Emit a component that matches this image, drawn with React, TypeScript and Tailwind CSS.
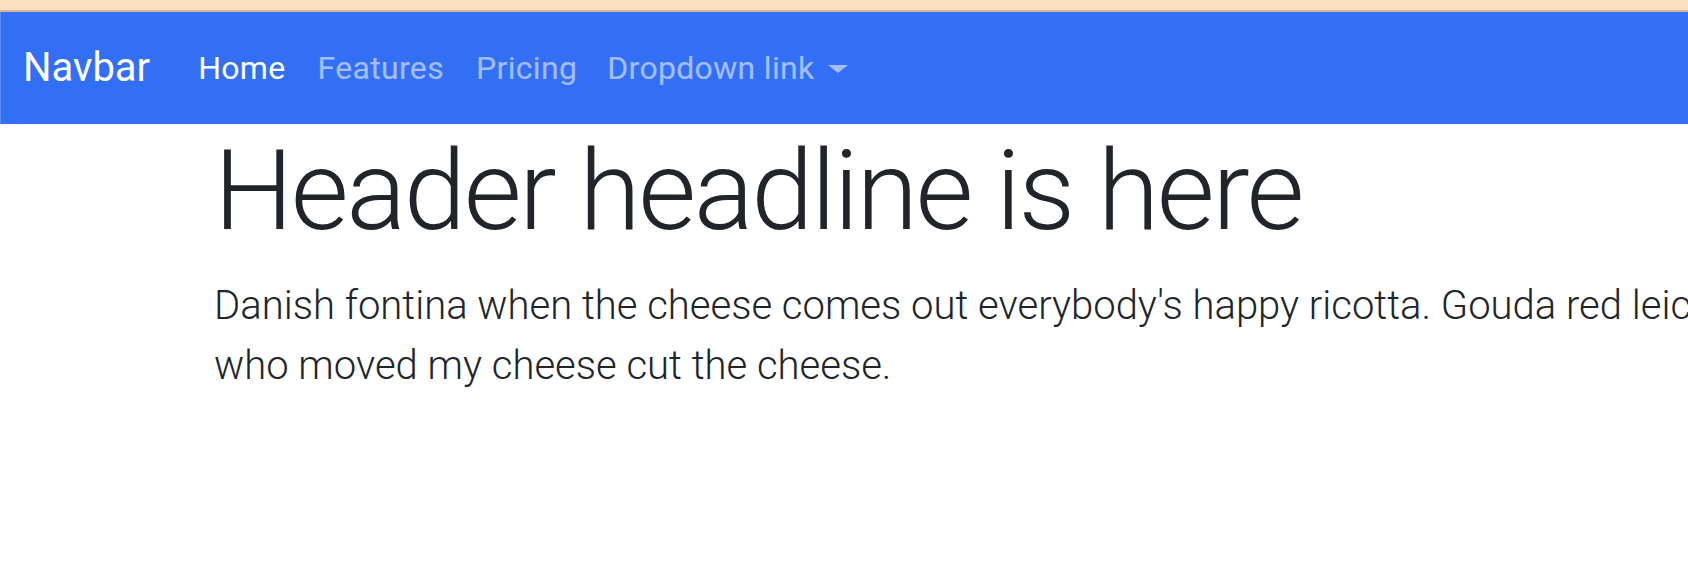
import React from 'react';

const links = [
  { label: 'Home', active: true },
  { label: 'Features' },
  { label: 'Pricing' },
];

export default function App() {
  return (
    <div className="w-full min-h-screen bg-white overflow-hidden font-['Roboto',sans-serif] text-[#212529]">
      {/* top strip */}
      <div className="h-[10px] bg-[#fbe0bf]" />
      <div className="h-[2px] bg-[#d8b893]" />

      {/* Navbar */}
      <nav className="h-[112px] bg-[#336ff5] border-l border-l-[#5c8cf6] flex items-center pl-[22px]">
        <a className="text-[40px] leading-[60px] text-white mr-[32px]">Navbar</a>
        <ul className="flex items-center">
          {links.map((l) => (
            <li key={l.label}>
              <a
                className={`block px-4 text-[32px] leading-[48px] tracking-[0.01em] ${
                  l.active ? 'text-white' : 'text-white/55'
                } ${l.label === 'Pricing' ? 'pr-[14px]' : ''}`}
              >
                {l.label}
              </a>
            </li>
          ))}
          <li>
            <a className="flex items-center px-4 text-[32px] leading-[48px] tracking-[0.01em] text-white/55">
              Dropdown link
              <span className="ml-[13px] mt-[2px] w-0 h-0 border-x-[10px] border-x-transparent border-t-[8px] border-t-white/55" />
            </a>
          </li>
        </ul>
      </nav>

      {/* Header */}
      <div className="pl-[214px] whitespace-nowrap">
        <h1 className="text-[112px] font-light leading-[1.2] tracking-[-0.022em] mb-[18px]">
          Header headline is here
        </h1>
        <p className="text-[40px] font-light leading-[60px]">
          Danish fontina when the cheese comes out everybody's happy ricotta. Gouda red leicester say cheese
          <br />
          who moved my cheese cut the cheese.
        </p>
      </div>
    </div>
  );
}
